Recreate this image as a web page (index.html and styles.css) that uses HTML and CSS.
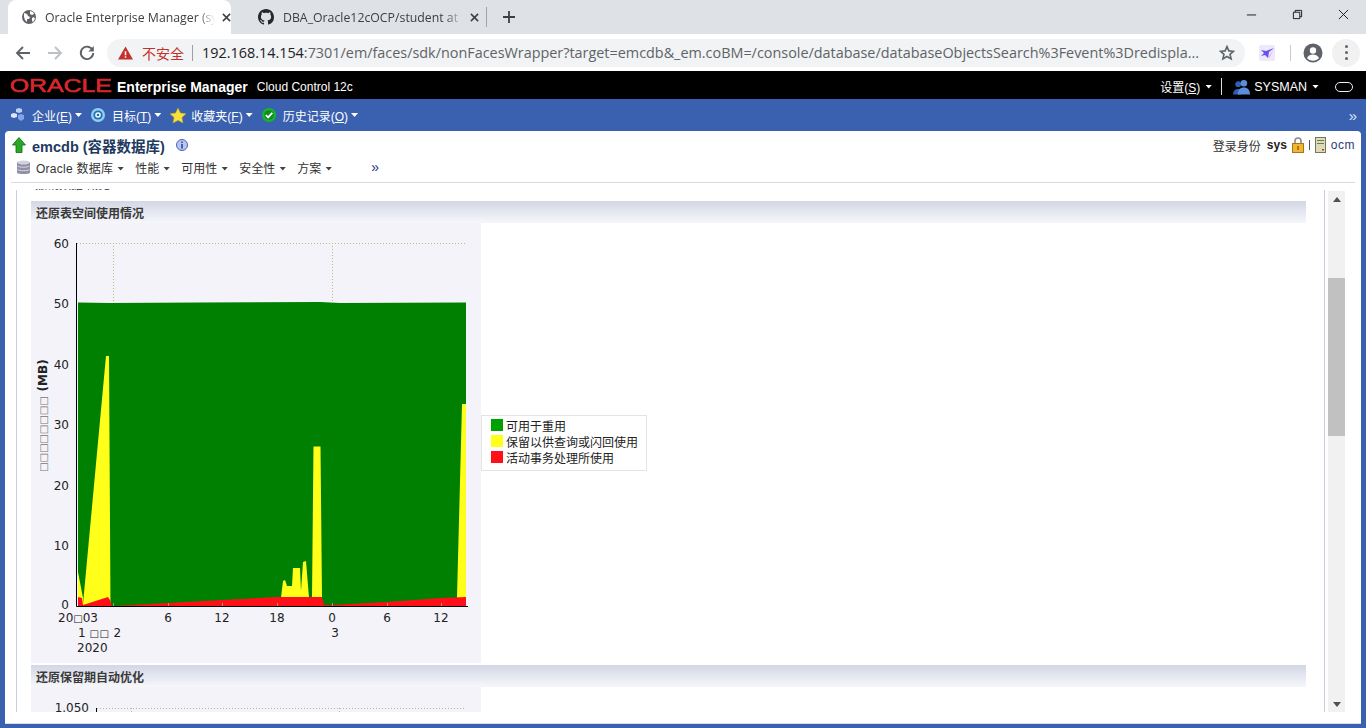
FILE: index.html
```html
<!DOCTYPE html>
<html>
<head lang="zh">
    <meta charset="UTF-8">
    <title>Oracle Enterprise Manager</title>
    <link rel="stylesheet" href="styles.css">
</head>
<body>
<div class="tabstrip">
    <div class="tab tab-active">
        <svg class="favicon" viewBox="0 0 16 16"><circle cx="8" cy="8" r="7" fill="#5f6368"/><path d="M3 4l3 1 1 2 2 1-1 2-2 0 0 3-2-2-1-3zM9 2l3 1 1 2-2 1-2-1zM11 9l2-1 1 2-2 3-1-1z" fill="#fff"/></svg>
        <span class="tab-title">Oracle Enterprise Manager (sys</span>
        <svg class="tab-x" viewBox="0 0 10 10"><path d="M1 1l8 8M9 1l-8 8" stroke="#3c4043" stroke-width="1.7"/></svg>
    </div>
    <div class="tab tab-gh">
        <svg class="favicon" viewBox="0 0 16 16"><path fill="#24292e" d="M8 0C3.58 0 0 3.58 0 8c0 3.54 2.29 6.53 5.47 7.59.4.07.55-.17.55-.38 0-.19-.01-.82-.01-1.49-2.01.37-2.53-.49-2.69-.94-.09-.23-.48-.94-.82-1.13-.28-.15-.68-.52-.01-.53.63-.01 1.08.58 1.23.82.72 1.21 1.87.87 2.33.66.07-.52.28-.87.51-1.07-1.78-.2-3.64-.89-3.64-3.95 0-.87.31-1.59.82-2.15-.08-.2-.36-1.02.08-2.12 0 0 .67-.21 2.2.82.64-.18 1.32-.27 2-.27s1.36.09 2 .27c1.53-1.04 2.2-.82 2.2-.82.44 1.1.16 1.92.08 2.12.51.56.82 1.27.82 2.15 0 3.07-1.87 3.75-3.65 3.95.29.25.54.73.54 1.48 0 1.07-.01 1.93-.01 2.2 0 .21.15.46.55.38A8.01 8.01 0 0 0 16 8c0-4.42-3.58-8-8-8z"/></svg>
        <span class="tab-title tab-title-gh">DBA_Oracle12cOCP/student at</span>
        <svg class="tab-x" viewBox="0 0 10 10"><path d="M1 1l8 8M9 1l-8 8" stroke="#3c4043" stroke-width="1.7"/></svg>
    </div>
    <span class="tab-sep"></span>
    <svg class="tab-plus" viewBox="0 0 12 12"><path d="M6 0v12M0 6h12" stroke="#3c4043" stroke-width="1.8"/></svg>
    <div class="win-btns">
        <svg viewBox="0 0 12 12"><path d="M1 6.500h10" stroke="#111" stroke-width="1"/></svg>
        <svg viewBox="0 0 12 12"><path d="M1.500 3.500h7v7h-7zM3.500 3.500v-2h7v7h-2" fill="none" stroke="#111" stroke-width="1"/></svg>
        <svg viewBox="0 0 12 12"><path d="M1 1l10 10M11 1L1 11" stroke="#111" stroke-width="1"/></svg>
    </div>
</div>

<div class="toolbar">
    <svg class="tool-btn" viewBox="0 0 16 16"><path d="M15 8H2.500M8 2L2 8l6 6" fill="none" stroke="#5f6368" stroke-width="1.900"/></svg>
    <svg class="tool-btn" viewBox="0 0 16 16"><path d="M1 8h12.500M8 2l6 6-6 6" fill="none" stroke="#bdc1c6" stroke-width="1.900"/></svg>
    <svg class="tool-btn" viewBox="0 0 16 16"><path d="M13.500 5A6.200 6.200 0 1 0 14.200 8" fill="none" stroke="#5f6368" stroke-width="1.900"/><path d="M14.800 1v5.400H9.400z" fill="#5f6368"/></svg>
    <div class="omnibox">
        <svg class="warn" viewBox="0 0 16 14"><path d="M8 0l8 14H0z" fill="#c5302a"/><path d="M7.200 5h1.600v4.500H7.200zM7.200 10.500h1.600V12H7.200z" fill="#fff"/></svg>
        <span class="insecure">不安全</span>
        <span class="omni-sep"></span>
        <span class="url"><b>192.168.14.154</b>:7301/em/faces/sdk/nonFacesWrapper?target=emcdb&amp;_em.coBM=/console/database/databaseObjectsSearch%3Fevent%3Dredispla...</span>
        <svg class="omni-star" viewBox="0 0 16 16"><path d="M8 1.600l1.900 4.300 4.600.4-3.500 3 1.100 4.600L8 11.500l-4.100 2.400L5 9.300l-3.500-3 4.600-.4z" fill="none" stroke="#5f6368" stroke-width="1.600"/></svg>
    </div>
    <div class="ext-icon"><svg viewBox="0 0 16 16"><path d="M15 3L10 7l-1 6-3-3-4 1 3-3L2 5l5 1z" fill="#6b4ff0"/><path d="M15 3l-4 9-2 1z" fill="#f0a8e0"/></svg></div>
    <span class="tool-sep"></span>
    <svg class="avatar" viewBox="0 0 20 20"><circle cx="10" cy="10" r="9.500" fill="#5f6368"/><circle cx="10" cy="7.500" r="3.200" fill="#fff"/><path d="M4 15c1.300-2.500 3.500-3.500 6-3.500s4.700 1 6 3.500c-1.500 1.800-3.600 2.800-6 2.800S5.500 16.800 4 15z" fill="#fff"/></svg>
    <div class="kebab"><i></i><i></i><i></i></div>
</div>

<div class="em-top">
    <span class="oracle-logo">ORACLE</span>
    <span class="em-name">Enterprise Manager</span>
    <span class="em-sub">Cloud Control 12c</span>
    <span class="em-right">
        <span class="em-link">设置(<u>S</u>)</span><i class="caret"></i>
        <span class="em-divider"></span>
        <svg class="user-icon" viewBox="0 0 18 16"><circle cx="5.500" cy="5" r="3" fill="#2f5fb0"/><circle cx="11.500" cy="4" r="3.500" fill="#5b8fdc"/><path d="M0 16c0-4 2-6 5.500-6S9 12 9 16z" fill="#2f5fb0"/><path d="M5 16c0-5 2.500-7.500 6.500-7.500S18 11 18 16z" fill="#5b8fdc"/></svg>
        <span class="em-link em-user">SYSMAN</span><i class="caret"></i>
        <span class="oracle-ring"></span>
    </span>
</div>

<div class="em-nav">
    <div class="nav-item">
        <svg class="nav-icon" viewBox="0 0 14 14"><path d="M5 1l3-1 3 1v3L8 5 5 4z" fill="#b9d0f5"/><path d="M0 6l3-1 3 1v3l-3 1-3-1z" fill="#dfe9fb"/><path d="M7 7l3-1 3 1v4l-3 2-3-2z" fill="#7ea6e8"/></svg>
        <span>企业(<u>E</u>)</span><i class="caret"></i>
    </div>
    <div class="nav-item">
        <svg class="nav-icon" viewBox="0 0 14 14"><circle cx="7" cy="7" r="7" fill="#8fd0ec"/><circle cx="7" cy="7" r="4.600" fill="#1e6fb8"/><circle cx="7" cy="7" r="2.800" fill="#fff"/><circle cx="7" cy="7" r="1.300" fill="#1e6fb8"/></svg>
        <span>目标(<u>T</u>)</span><i class="caret"></i>
    </div>
    <div class="nav-item">
        <svg class="nav-icon nav-star" viewBox="0 0 16 15"><path d="M8 0l2.400 5 5.600.7-4.100 3.800 1.100 5.500L8 12.300 3 15l1.100-5.500L0 5.700 5.600 5z" fill="#f6e23a" stroke="#c9a90f" stroke-width=".5"/></svg>
        <span>收藏夹(<u>F</u>)</span><i class="caret"></i>
    </div>
    <div class="nav-item">
        <svg class="nav-icon" viewBox="0 0 14 14"><circle cx="7" cy="7" r="7" fill="#17b52e"/><circle cx="7" cy="7" r="4.800" fill="#0c8f20"/><path d="M3.800 7l2.300 2.400 4.200-4.600" fill="none" stroke="#fff" stroke-width="1.800"/></svg>
        <span>历史记录(<u>O</u>)</span><i class="caret"></i>
    </div>
    <span class="nav-more">»</span>
</div>

<div class="page-wrap">
    <div class="card">
        <div class="target-head">
            <div class="target-row">
                <svg class="up-arrow" viewBox="0 0 14 16"><path d="M7 .5L13.500 8H10v7.500H4V8H.5z" fill="#27a827" stroke="#0f6a0f" stroke-width=".8"/></svg>
                <h1 class="target-title">emcdb (容器数据库)</h1>
                <svg class="info-icon" viewBox="0 0 12 12"><circle cx="6" cy="6" r="5.500" fill="#b9c6ee" stroke="#4a62c0"/><path d="M5.200 2.500h1.600v1.500H5.200zM5.200 5h1.600v4.500H5.200z" fill="#2f47a8"/></svg>
                <div class="login-info">
                    <span>登录身份</span>
                    <b>sys</b>
                    <svg class="lock" viewBox="0 0 12 16"><path d="M3 7V4a3 3 0 0 1 6 0v3" fill="none" stroke="#8a8a8a" stroke-width="1.600"/><rect x=".5" y="6.500" width="11" height="9" fill="#f2b632" stroke="#a8761a"/><path d="M5.500 9h1v4h-1z" fill="#5a3d08"/></svg>
                    <span class="bar"></span>
                    <svg class="server" viewBox="0 0 11 16"><rect x=".5" y=".5" width="10" height="15" fill="#dcdcb8" stroke="#75755a"/><path d="M2 3h7v1H2zM2 6h7v1H2z" fill="#75755a"/><path d="M7 12h2v1.500H7z" fill="#c33"/></svg>
                    <span class="host">ocm</span>
                </div>
            </div>
            <div class="menu-row">
                <svg class="db-icon" viewBox="0 0 13 15"><path d="M0 2.500C0 1 13 1 13 2.500v10c0 2-13 2-13 0z" fill="#8f8fa6"/><ellipse cx="6.500" cy="2.500" rx="6" ry="2" fill="#d2d2de"/><path d="M.5 6c2 1.600 10 1.600 12 0M.5 9.500c2 1.600 10 1.600 12 0" fill="none" stroke="#dcdce6"/></svg>
                <span class="menu-item menu-first">Oracle 数据库<i class="caret caret-dark"></i></span>
                <span class="menu-item">性能<i class="caret caret-dark"></i></span>
                <span class="menu-item">可用性<i class="caret caret-dark"></i></span>
                <span class="menu-item">安全性<i class="caret caret-dark"></i></span>
                <span class="menu-item">方案<i class="caret caret-dark"></i></span>
                <span class="menu-more">»</span>
            </div>
        </div>

        <div class="card-body">
            <div class="pane">
                <div class="clip-line"><span>撤销数据 概览</span></div>
                <div class="section-head">还原表空间使用情况</div>
                <div class="chart-row">
                    <div class="chart-panel">
                        <svg class="chart" viewBox="31 223 450 440">
                            <path class="grid" d="M77 243.500H466M113.500 243V303M332.500 243V303"/>
                            <path class="area-green" d="M78 302.500L110 303 200 302.500 320 302 340 303 466 302.500V606H78z"/>
                            <path class="area-yellow" d="M78 572L83 598 83 604 106 356 109 356 110.500 606 83 606 78 600z"/>
                            <path class="area-yellow" d="M281 598L283 581 285 580 287 586 292 586 293 568 300 568 301 591 303 562 306 561 309 598z"/>
                            <path class="area-yellow" d="M312 598L313.500 446.500H320.500L322 598z"/>
                            <path class="area-yellow" d="M457 598L462 404H465L466 404V598z"/>
                            <path class="area-red" d="M78 597L82 598 83 605 108 597 110 600 112 606H78z"/>
                            <path class="area-red" d="M113 606L150 604 222 600 277 597 322 597 324 605 333 605 387 602 441 598 466 597V606z"/>
                            <path class="tick" d="M113.500 603V606M168.500 603V606M222.500 603V606M277.500 603V606M332.500 603V606M387.500 603V606M441.500 603V606"/>
                            <path class="axis" d="M76.500 243V606.500H468"/>
                            <text class="lbl" x="69" y="248" text-anchor="end">60</text>
                            <text class="lbl" x="69" y="308" text-anchor="end">50</text>
                            <text class="lbl" x="69" y="369" text-anchor="end">40</text>
                            <text class="lbl" x="69" y="429" text-anchor="end">30</text>
                            <text class="lbl" x="69" y="490" text-anchor="end">20</text>
                            <text class="lbl" x="69" y="550" text-anchor="end">10</text>
                            <text class="lbl" x="69" y="609" text-anchor="end">0</text>
                            <text class="lbl" x="58" y="622">20<tspan class="tofu">□</tspan>03</text>
                            <text class="lbl" x="78" y="637">1 <tspan class="tofu tofu-wide">□□</tspan> 2</text>
                            <text class="lbl" x="77" y="652">2020</text>
                            <text class="lbl" x="168" y="622" text-anchor="middle">6</text>
                            <text class="lbl" x="222" y="622" text-anchor="middle">12</text>
                            <text class="lbl" x="277" y="622" text-anchor="middle">18</text>
                            <text class="lbl" x="332" y="622" text-anchor="middle">0</text>
                            <text class="lbl" x="335" y="637" text-anchor="middle">3</text>
                            <text class="lbl" x="387" y="622" text-anchor="middle">6</text>
                            <text class="lbl" x="441" y="622" text-anchor="middle">12</text>
                            <text class="lbl" transform="translate(47 472) rotate(-90)"><tspan class="tofu tofu-axis">□□□□□□□□</tspan><tspan dx="5" font-weight="bold">(MB)</tspan></text>
                        </svg>
                    </div>
                    <div class="legend">
                        <div class="legend-row"><i class="swatch sw-green"></i>可用于重用</div>
                        <div class="legend-row"><i class="swatch sw-yellow"></i>保留以供查询或闪回使用</div>
                        <div class="legend-row"><i class="swatch sw-red"></i>活动事务处理所使用</div>
                    </div>
                </div>
                <div class="section-head section-second">还原保留期自动优化</div>
                <div class="chart-panel chart-panel-cut">
                    <svg class="chart" viewBox="31 687 450 25">
                        <path class="grid" d="M97 708.500H466M131.500 708V712M339.500 708V712"/>
                        <path class="axis" d="M96.500 708V712"/>
                        <text class="lbl" x="89" y="712" text-anchor="end">1.050</text>
                    </svg>
                </div>
            </div>
            <div class="scrollbar">
                <i class="sb-up"></i>
                <div class="sb-track"><div class="sb-thumb"></div></div>
                <i class="sb-down"></i>
            </div>
        </div>
    </div>
</div>
</body>
</html>
```

FILE: styles.css
```css
* {
    box-sizing: border-box;
}

html, body {
    margin: 0;
    height: 728px;
    overflow: hidden;
    background: #3a60b0;
}

body {
    font-family: "Liberation Sans", "Noto Sans CJK SC", sans-serif;
    font-size: 12px;
    color: #222;
}

svg {
    display: block;
    flex: none;
}

/* browser chrome */
.tabstrip {
    display: flex;
    align-items: center;
    height: 34px;
    padding-left: 8px;
    background: #dee1e6;
    font-family: "Open Sans", "Noto Sans CJK SC", sans-serif;
}

.tab {
    display: flex;
    align-items: center;
    width: 223px;
    height: 34px;
    padding: 0 0 0 13px;
}

.tab-active {
    background: #fff;
    border-radius: 8px 8px 0 0;
}

.tab-gh {
    width: 255px;
    padding-left: 27px;
}

.favicon {
    width: 16px;
    height: 16px;
    margin-right: 8px;
}

.tab-title {
    width: 174px;
    overflow: hidden;
    white-space: nowrap;
    font-size: 12.3px;
    color: #3c4043;
    -webkit-mask-image: linear-gradient(90deg, #000 90%, transparent);
}

.tab-title-gh {
    width: 180px;
    margin-left: 1px;
}

.tab-x {
    width: 9px;
    height: 9px;
    margin-left: 7px;
}

.tab-sep {
    width: 1px;
    height: 20px;
    background: #a0a3a8;
}

.tab-plus {
    width: 12px;
    height: 12px;
    margin-left: 16px;
}

.win-btns {
    display: flex;
    gap: 35px;
    margin-left: auto;
    padding-right: 17px;
    margin-top: -6px;
}

.win-btns svg {
    width: 11px;
    height: 11px;
}

.toolbar {
    display: flex;
    align-items: center;
    height: 37px;
    padding-left: 15px;
    background: #fff;
}

.tool-btn {
    width: 16px;
    height: 16px;
    margin-right: 16px;
}

.omnibox {
    display: flex;
    align-items: center;
    flex: none;
    width: 1138px;
    height: 28px;
    margin-left: -4px;
    padding-left: 11px;
    border-radius: 14px;
    background: #f1f3f4;
    font-family: "Open Sans", "Noto Sans CJK SC", sans-serif;
}

.warn {
    width: 15px;
    height: 14px;
}

.insecure {
    margin-left: 9px;
    font-size: 14px;
    color: #c5302a;
}

.omni-sep {
    width: 1px;
    height: 16px;
    margin: 0 9px 0 8px;
    background: #9aa0a6;
}

.url {
    width: 1006px;
    white-space: nowrap;
    overflow: hidden;
    font-size: 14.4px;
    color: #5f6368;
}

.url b {
    font-weight: normal;
    color: #202124;
}

.omni-star {
    width: 16px;
    height: 16px;
    margin-left: 11px;
}

.ext-icon {
    width: 16px;
    height: 16px;
    margin-left: 14px;
    background: #ece9fb;
    border-radius: 2px;
}

.tool-sep {
    width: 1px;
    height: 16px;
    margin: 0 12px 0 15px;
    background: #c8cacd;
}

.avatar {
    width: 20px;
    height: 20px;
}

.kebab {
    display: flex;
    flex-direction: column;
    align-items: center;
    justify-content: center;
    gap: 3px;
    width: 28px;
    height: 28px;
    margin-left: 9px;
    border-radius: 50%;
    background: #f1f1f1;
}

.kebab i {
    width: 3px;
    height: 3px;
    border-radius: 50%;
    background: #5f6368;
}

/* EM branding */
.em-top {
    display: flex;
    align-items: center;
    height: 28px;
    padding: 3px 0 0 10px;
    background: #000;
    color: #fff;
}

.oracle-logo {
    width: 104px;
    font-size: 17.5px;
    line-height: 1;
    color: #d9262b;
    -webkit-text-stroke: .6px #d9262b;
    transform: scaleX(1.42);
    transform-origin: left center;
}

.em-name {
    margin-left: 3px;
    font-size: 14px;
    font-weight: bold;
}

.em-sub {
    margin-left: 9px;
    font-size: 12px;
}

.em-right {
    display: flex;
    align-items: center;
    margin-left: auto;
    padding-right: 13px;
}

.em-link {
    font-size: 12px;
}

.em-divider {
    width: 1px;
    height: 17px;
    margin: 0 11px 0 9px;
    background: #ddd;
}

.user-icon {
    width: 17px;
    height: 16px;
    margin-right: 4px;
}

.em-user {
    font-size: 12.5px;
}

.oracle-ring {
    width: 18px;
    height: 10px;
    margin-left: 16px;
    border: 1.5px solid #e8eefc;
    border-radius: 5px;
    background: #000;
}

.caret {
    display: block;
    flex: none;
    width: 7px;
    height: 4px;
    margin-left: 5px;
    background: #fff;
    clip-path: polygon(0 0, 100% 0, 50% 100%);
}

.caret-dark {
    display: inline-block;
    margin-left: 4px;
    vertical-align: 2px;
    background: #444;
}

/* main nav */
.em-nav {
    display: flex;
    align-items: center;
    height: 32px;
    padding-left: 11px;
    background: #3a60b0;
    color: #fff;
}

.nav-item {
    display: flex;
    align-items: center;
    margin-right: 9px;
}

.nav-item .caret {
    margin-left: 3px;
}

.nav-icon {
    width: 14px;
    height: 14px;
    margin-right: 7px;
}

.nav-star {
    width: 16px;
    height: 15px;
    margin-right: 5px;
}

.nav-more {
    margin-left: auto;
    padding-right: 9px;
    font-size: 15px;
    line-height: 1;
    color: #dfe7f7;
}

/* content card */
.page-wrap {
    padding: 0 5px;
}

.card {
    height: 592px;
    padding: 0 0 10px;
    border-radius: 4px 4px 0 0;
    background: #fff;
    box-shadow: 0 1px 0 #d9dce4;
}

.target-head {
    height: 52px;
    margin: 0 6px;
    border-bottom: 1px solid #d5dae5;
}

.target-row {
    display: flex;
    align-items: center;
    height: 28px;
    padding-left: 1px;
}

.up-arrow {
    width: 14px;
    height: 16px;
}

.target-title {
    margin: 0 0 0 6px;
    font-size: 14.5px;
    font-weight: bold;
    color: #1e3a5f;
}

.info-icon {
    width: 12px;
    height: 12px;
    margin-left: 11px;
}

.login-info {
    display: flex;
    align-items: center;
    margin-left: auto;
    font-size: 12px;
    color: #333;
}

.login-info b {
    margin-left: 6px;
    color: #222;
}

.lock {
    width: 12px;
    height: 16px;
    margin-left: 5px;
}

.bar {
    width: 1px;
    height: 10px;
    margin: 0 5px;
    background: #556;
}

.server {
    width: 11px;
    height: 16px;
}

.host {
    margin-left: 5px;
    font-size: 12px;
    letter-spacing: .5px;
    color: #2c3a78;
}

.menu-row {
    display: flex;
    align-items: center;
    height: 22px;
    padding-left: 6px;
    margin-top: -3px;
}

.db-icon {
    width: 13px;
    height: 15px;
    margin-right: 6px;
}

.menu-item {
    margin-right: 11px;
    font-size: 12px;
    color: #333;
    white-space: nowrap;
}

.menu-first {
    letter-spacing: .25px;
}

.menu-more {
    margin-left: 28px;
    font-size: 14px;
    line-height: 1;
    color: #1f2f80;
}

.card-body {
    display: flex;
    height: 529px;
}

.pane {
    width: 1309px;
    margin-left: 11px;
    padding-left: 15px;
    overflow: hidden;
    position: relative;
}

/* thin rule down the left and right of the pane */
.pane::before, .pane::after {
    content: "";
    position: absolute;
    top: 7px;
    bottom: 0;
    width: 1px;
    background: #c5cfe0;
}

.pane::before {
    left: 0;
}

.pane::after {
    right: 0;
}

/* last row of a table scrolled away above the section, only its bottom shows */
.clip-line {
    height: 3px;
    margin-top: 6px;
    padding-left: 4px;
    overflow: hidden;
    color: #333;
}

.clip-line span {
    display: block;
    margin-top: -12px;
    line-height: 16px;
}

.section-head {
    width: 1275px;
    height: 22px;
    margin-top: 9px;
    padding-left: 5px;
    line-height: 26px;
    font-weight: bold;
    color: #3a3a3a;
    background: linear-gradient(#d3d7e5, #f6f7fb);
}

.section-second {
    margin-top: 2px;
}

.chart-row {
    display: flex;
    align-items: center;
}

.chart-panel {
    width: 450px;
    height: 440px;
    background: #f3f3f9;
}

.chart-panel-cut {
    height: 25px;
}

.chart {
    width: 100%;
    height: 100%;
}

.grid {
    fill: none;
    stroke: #b9bd82;
    stroke-dasharray: 1 2;
}

.area-green {
    fill: #008000;
}

.area-yellow {
    fill: #ffff1a;
}

.area-red {
    fill: #ff1019;
}

.tick {
    fill: none;
    stroke: #9a9a9a;
}

.axis {
    fill: none;
    stroke: #000;
}

.lbl {
    font-family: "DejaVu Sans", sans-serif;
    font-size: 12px;
    fill: #222;
}

.tofu {
    font-size: 10px;
}

.tofu-wide {
    letter-spacing: .7px;
}

.tofu-axis {
    fill: #777;
}

.legend {
    width: 166px;
    height: 56px;
    padding: 1px 0 0 9px;
    background: #fff;
    border: 1px solid #e4e4e4;
}

.legend-row {
    display: flex;
    align-items: center;
    height: 16px;
    font-size: 12px;
    color: #222;
    white-space: nowrap;
}

.swatch {
    width: 12px;
    height: 12px;
    margin-right: 3px;
}

.sw-green {
    background: #00a000;
}

.sw-yellow {
    background: #ffff1a;
}

.sw-red {
    background: #ff1019;
}

.scrollbar {
    display: flex;
    flex-direction: column;
    align-items: center;
    width: 17px;
    height: 521px;
    margin: 8px 0 0 3px;
    background: #f1f1f1;
}

.sb-up, .sb-down {
    flex: none;
    width: 0;
    height: 0;
    margin: 6px 0 5px;
    border-left: 4px solid transparent;
    border-right: 4px solid transparent;
}

.sb-up {
    border-bottom: 5px solid #505050;
}

.sb-down {
    border-top: 5px solid #505050;
}

.sb-track {
    flex: 1;
    width: 100%;
    padding-top: 71px;
}

.sb-thumb {
    height: 158px;
    background: #c1c1c1;
}
```
